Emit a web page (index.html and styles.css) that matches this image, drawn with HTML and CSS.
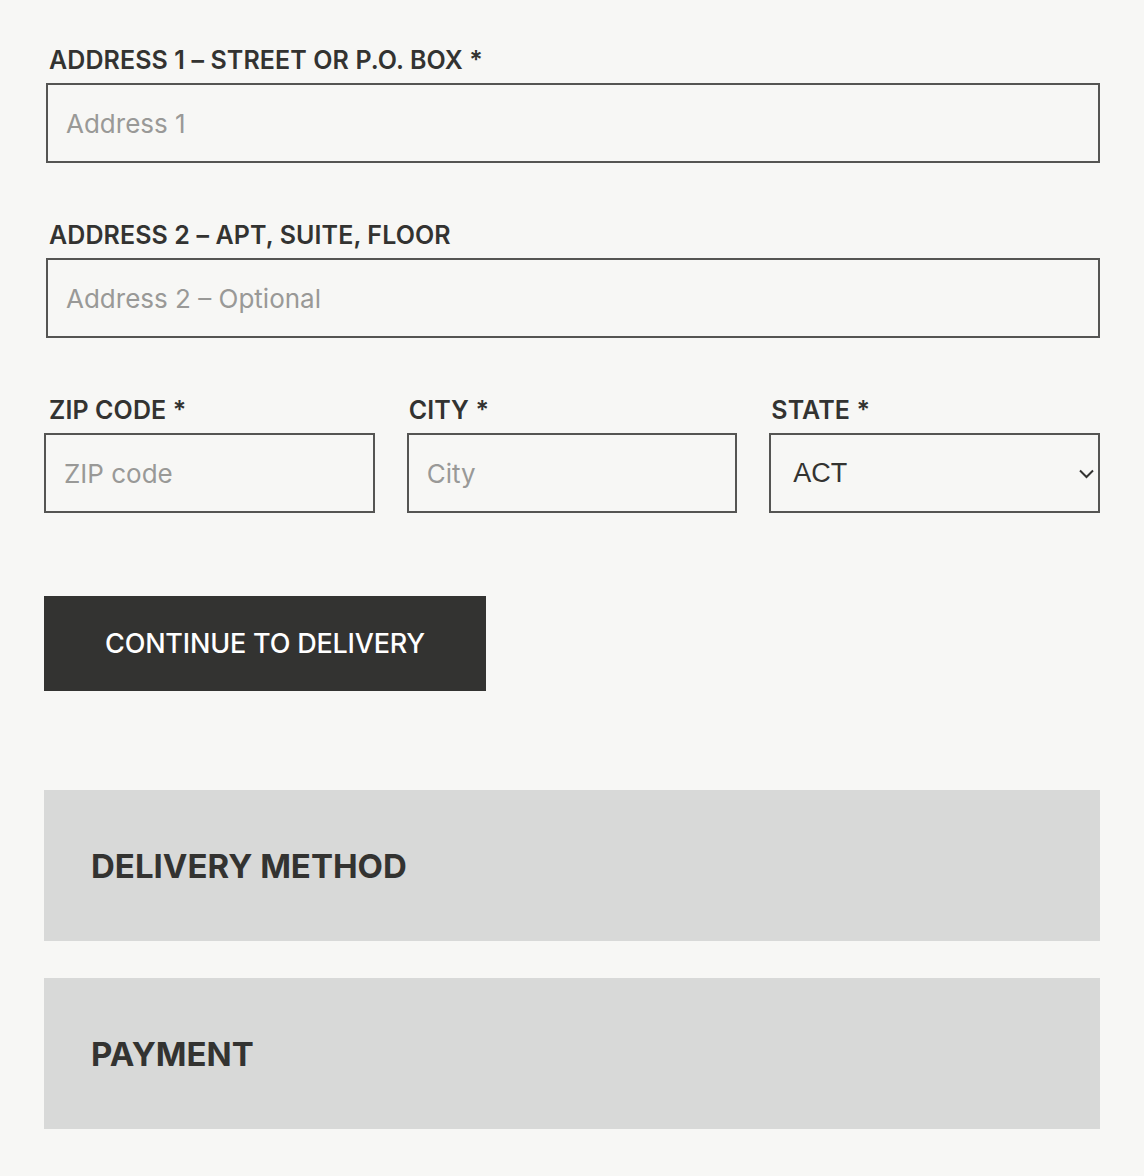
FILE: index.html
```html
<!DOCTYPE html>
<html lang="en">
<head>
<meta charset="utf-8">
<title>Checkout</title>
<link rel="stylesheet" href="styles.css">
</head>
<body>
<main class="checkout">
  <form class="address-form">
    <div class="field field-wide">
      <label class="field-label" for="addr1">ADDRESS 1 – STREET OR P.O. BOX *</label>
      <input class="field-input" id="addr1" type="text" placeholder="Address 1">
    </div>
    <div class="field field-wide">
      <label class="field-label" for="addr2">ADDRESS 2 – APT, SUITE, FLOOR</label>
      <input class="field-input" id="addr2" type="text" placeholder="Address 2 – Optional">
    </div>
    <div class="field-row">
      <div class="field">
        <label class="field-label" for="zip">ZIP CODE *</label>
        <input class="field-input" id="zip" type="text" placeholder="ZIP code">
      </div>
      <div class="field">
        <label class="field-label" for="city">CITY *</label>
        <input class="field-input" id="city" type="text" placeholder="City">
      </div>
      <div class="field">
        <label class="field-label" for="state">STATE *</label>
        <div class="select-wrap">
          <select class="field-input field-select" id="state">
            <option>ACT</option>
            <option>NSW</option>
            <option>NT</option>
            <option>QLD</option>
            <option>SA</option>
            <option>TAS</option>
            <option>VIC</option>
            <option>WA</option>
          </select>
          <svg class="select-arrow" width="15" height="10" viewBox="0 0 15 10"><path d="M1 1.5 L7.5 8 L14 1.5" fill="none" stroke="#333331" stroke-width="2"/></svg>
        </div>
      </div>
    </div>
    <button class="btn-continue" type="button">CONTINUE TO DELIVERY</button>
  </form>
  <section class="step-panel"><h2 class="step-title">DELIVERY METHOD</h2></section>
  <section class="step-panel"><h2 class="step-title">PAYMENT</h2></section>
</main>
</body>
</html>
```
FILE: styles.css
```css
* { box-sizing: border-box; }
html, body { margin: 0; padding: 0; background: #f7f7f5; }
body {
  font-family: Inter, "Noto Sans", "Liberation Sans", sans-serif;
  color: #333331;
}
.checkout {
  width: 1056px;
  margin-left: 44px;
  padding-top: 45px;
  padding-bottom: 48px;
}
.field { display: flex; flex-direction: column; }
.field-wide { margin-bottom: 57px; padding-left: 2px; }
.field-label {
  display: block;
  font-size: 25px;
  font-weight: 600;
  line-height: 30px;
  margin-bottom: 8px;
  padding-left: 3px;
  letter-spacing: 0.1px;
}
.field-row .field-label { padding-left: 2px; }
.field-row .field:first-child .field-label { padding-left: 5px; }
.field-input {
  height: 80px;
  width: 100%;
  border: 2px solid #555553;
  border-radius: 0;
  background: #f7f7f5;
  padding: 0 18px;
  font-family: Inter, "Noto Sans", sans-serif;
  font-size: 26px;
  color: #333331;
  outline: none;
}
.field-input::placeholder { color: #999997; }
.field-row {
  display: grid;
  grid-template-columns: repeat(3, 1fr);
  column-gap: 32px;
}
.select-wrap { position: relative; }
.field-select {
  appearance: none;
  -webkit-appearance: none;
  font-family: "Liberation Sans", Arial, sans-serif;
  font-size: 27px;
  padding-left: 22px;
}
.select-arrow {
  position: absolute;
  right: 6px;
  top: 36px;
  pointer-events: none;
}
.btn-continue {
  display: block;
  margin-top: 83px;
  width: 442px;
  height: 95px;
  border: none;
  background: #333331;
  color: #ffffff;
  font-family: Inter, "Noto Sans", sans-serif;
  font-size: 27px;
  font-weight: 500;
  letter-spacing: -0.2px;
}
.step-panel {
  background: #d8d9d8;
  height: 151px;
  display: flex;
  align-items: center;
  padding-left: 47px;
  margin-top: 37px;
}
.address-form + .step-panel { margin-top: 99px; }
.step-title {
  margin: 0;
  font-size: 33px;
  font-weight: 700;
  letter-spacing: 0;
}
```
